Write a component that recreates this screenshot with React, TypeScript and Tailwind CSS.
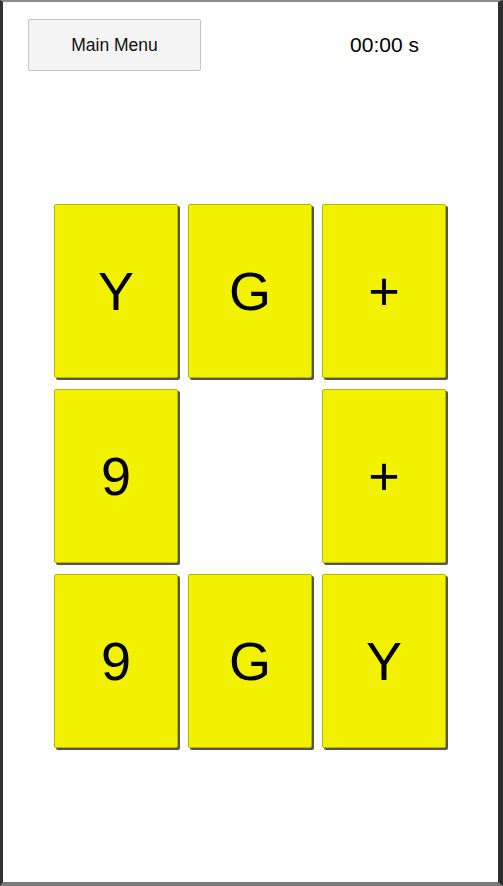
import React from 'react';

const cards: (string | null)[] = ['Y', 'G', '+', '9', null, '+', '9', 'G', 'Y'];

const App = () => {
  return (
    <div
      className="w-[503px] h-[886px] bg-white border-t-2 border-b-4 border-l-[3px] border-r-[5px] border-t-[#8c8c8c] border-b-[#7a7a7a] border-l-[#333333] border-r-[#2e2e2e] overflow-hidden"
      style={{ fontFamily: '"Liberation Sans", Arial, sans-serif' }}
    >
      <div className="flex items-center h-[70px] pt-[16px]">
        <button className="ml-[25px] w-[173px] h-[52px] bg-[#f4f4f4] border border-[#c4c4c4] rounded-[2px] text-[17.5px] text-[#111]">
          Main Menu
        </button>
        <div className="flex-1 text-center text-[21px] text-black pl-[70px]">00:00 s</div>
      </div>

      <div className="grid grid-cols-[124px_124px_124px] gap-x-[10px] gap-y-[11px] ml-[51px] mt-[132px]">
        {cards.map((c, i) =>
          c ? (
            <div
              key={i}
              className="h-[174px] bg-[#f2f200] border border-[#b8b800] rounded-[2px] shadow-[2px_2px_0_#555] flex items-center justify-center text-[54px] text-black leading-none"
            >
              {c}
            </div>
          ) : (
            <div key={i} className="h-[174px]" />
          )
        )}
      </div>
    </div>
  );
};

export default App;
